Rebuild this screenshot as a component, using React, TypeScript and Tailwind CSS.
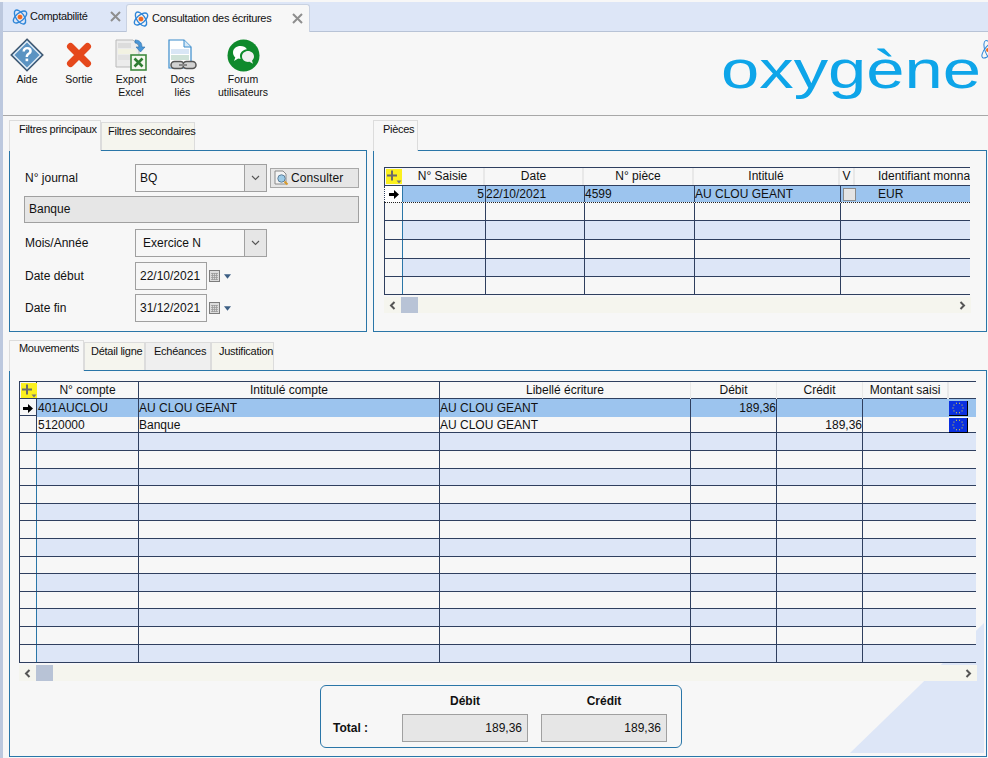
import type { ReactNode } from "react";

const LINE = "border-[#2f3f5f]";

function Atom() {
  return (
    <svg width="16" height="18" viewBox="0 0 16 18" className="shrink-0">
      <g fill="none" stroke="#2f86d8" strokeWidth="1.400">
        <ellipse cx="8" cy="9" rx="8" ry="4" transform="rotate(55 8 9)" />
        <ellipse cx="8" cy="9" rx="8" ry="4" transform="rotate(-40 8 9)" />
      </g>
      <circle cx="8" cy="9" r="2.800" fill="#ee6a22" stroke="#fff" strokeWidth=".6" />
    </svg>
  );
}

function CloseX() {
  return (
    <svg width="11" height="11" viewBox="0 0 11 11" className="shrink-0">
      <path d="M1 1l9 9M10 1l-9 9" stroke="#8e8e8e" strokeWidth="2" />
    </svg>
  );
}

function AideIcon() {
  return (
    <svg width="34" height="34" viewBox="0 0 34 34">
      <polygon points="17,1 33,17 17,33 1,17" fill="#3f78a8" stroke="#41566c" strokeWidth="1.200" />
      <polygon points="17,3.500 30.500,17 17,30.500 3.500,17" fill="#5b93c2" stroke="#e4edf5" strokeWidth="1.400" />
      <path d="M12.500 13.500c0-3 2-4.500 4.700-4.500 2.800 0 4.600 1.600 4.600 3.900 0 3.400-3.800 3.300-3.800 6.100h-2.400c0-4 3.600-4.100 3.600-6 0-1-.8-1.700-2-1.700-1.300 0-2.100.8-2.200 2.200z" fill="#fff" />
      <rect x="15.600" y="20.600" width="2.600" height="2.600" fill="#fff" />
    </svg>
  );
}

function SortieIcon() {
  return (
    <svg width="26" height="26" viewBox="0 0 26 26">
      <path d="M4.500 4.500l17 17M21.500 4.500l-17 17" stroke="#e5481c" strokeWidth="7" strokeLinecap="round" />
    </svg>
  );
}

function ExportIcon() {
  return (
    <svg width="32" height="32" viewBox="0 0 32 32">
      <path d="M1 1h17l6 6v21H1z" fill="#ececec" stroke="#b9b9b9" />
      <rect x="3" y="4" width="13" height="5" fill="#dcdcdc" />
      <rect x="3" y="10" width="18" height="5" fill="#f2f2e2" />
      <rect x="3" y="16" width="18" height="5" fill="#e2e2e2" />
      <path d="M20 1c5 0 7 3 7 7h3l-4.500 5L21 8h3c0-2-1-4-4-4z" fill="#4a97d8" stroke="#2f6fa8" strokeWidth=".6" />
      <rect x="16" y="16" width="15" height="15" fill="#f4f8ee" stroke="#3f8a3f" strokeWidth="1.600" />
      <path d="M19.500 19.500l8 8M27.500 19.500l-8 8" stroke="#2f7d32" strokeWidth="2.600" />
    </svg>
  );
}

function DocsIcon() {
  return (
    <svg width="30" height="32" viewBox="0 0 30 32">
      <path d="M1 1h15l7 7v21H1z" fill="#fff" stroke="#3a8ccc" strokeWidth="1.200" />
      <path d="M16 1v7h7" fill="#d6e8f6" stroke="#3a8ccc" />
      <rect x="3" y="10" width="18" height="5" fill="#d9e6f5" />
      <rect x="3" y="16" width="18" height="5" fill="#cfe2d8" />
      <g fill="#d2d2d2" stroke="#555" strokeWidth="1.500">
        <rect x="3" y="22.500" width="13" height="7" rx="3.500" />
        <rect x="15" y="22.500" width="13" height="7" rx="3.500" />
      </g>
      <rect x="11" y="25" width="8" height="2" fill="#888" />
    </svg>
  );
}

function ForumIcon() {
  return (
    <svg width="33" height="33" viewBox="0 0 33 33">
      <circle cx="16.500" cy="16.500" r="16" fill="#0f8a2c" />
      <path d="M6 13.500C6 9.500 9.500 7 13.500 7c2.800 0 5.200 1.200 6.400 3.200-4 .6-6.900 3.300-6.900 6.800 0 1 .2 1.900.7 2.800-.9.100-1.700 0-2.500-.2L7 22l1.300-3.500C6.900 17.200 6 15.500 6 13.500z" fill="#fff" />
      <path d="M15 17.500c0-3.200 2.900-5.500 6-5.500s6 2.300 6 5.500c0 1.700-.8 3.200-2 4.200l1 3-3.500-1.900c-3.800.8-7.500-1.700-7.500-5.300z" fill="#f0f0f0" />
    </svg>
  );
}

function ConsultIcon() {
  return (
    <svg width="15" height="16" viewBox="0 0 15 16" className="shrink-0">
      <path d="M1 1h8l3 3v10H1z" fill="#f4f4f4" stroke="#8a8a8a" />
      <circle cx="7.500" cy="8.500" r="3.700" fill="#9ccbe8" stroke="#5f7f9a" />
      <path d="M10.500 11.500l3 3" stroke="#d89a2a" strokeWidth="2" />
    </svg>
  );
}

function Calendar() {
  return (
    <div className="flex items-center gap-[3px]">
      <svg width="12" height="12" viewBox="0 0 12 12">
        <rect x=".5" y=".5" width="10" height="11" fill="#dcdcdc" stroke="#7c7c7c" />
        <path d="M2 3.500h7M2 5.500h7M2 7.500h7M2 9.500h7M3.500 3v7M5.500 3v7M7.500 3v7" stroke="#9a9a9a" strokeWidth=".8" />
      </svg>
      <svg width="7" height="5" viewBox="0 0 8 5">
        <path d="M0 0h8L4 5z" fill="#3d5f85" />
      </svg>
    </div>
  );
}

function ToolButton({ icon, label, className }: { icon: ReactNode; label: string[]; className: string }) {
  return (
    <div className={`flex shrink-0 flex-col items-center ${className}`}>
      <div className="flex h-[34px] items-center justify-center">{icon}</div>
      <div className="mt-[1px] text-center text-[10.5px] leading-[13px] text-[#111]">
        {label.map((line) => (
          <div key={line}>{line}</div>
        ))}
      </div>
    </div>
  );
}

function PanelTab({ label, active, className }: { label: string; active?: boolean; className: string }) {
  if (active) {
    return (
      <div className={`relative z-10 -mb-px h-[31px] shrink-0 border border-b-0 border-[#dcdcdc] bg-[#f7f7f7] text-[11px] leading-[15px] tracking-[-0.3px] text-[#111] ${className}`}>
        {label}
      </div>
    );
  }
  return (
    <div className={`mt-[2px] h-[28px] shrink-0 whitespace-nowrap border border-b-0 border-[#dcdcdc] pt-[1px] text-[11px] leading-[15px] tracking-[-0.25px] text-[#111] ${className}`}>
      {label}
    </div>
  );
}

function AddColumn() {
  return (
    <div className="relative ml-[1px] mt-[1px] h-[15px] w-[16px] bg-[#fbf01e]">
      <svg width="16" height="15" viewBox="0 0 16 15" className="absolute left-0 top-0">
        <path d="M1 6.500h10M6 1.500v10" stroke="#6b6b6b" strokeWidth="2" />
        <path d="M10.500 11.500h5l-2.500 3z" fill="#777" />
      </svg>
    </div>
  );
}

function RowArrow() {
  return (
    <svg width="10" height="9" viewBox="0 0 10 9">
      <path d="M0 3h5V0l5 4.500L5 9V6H0z" fill="#000" />
    </svg>
  );
}

function Flag() {
  return (
    <div className="mr-[8px] h-[15px] w-[19px] border-b border-r border-black bg-[#0a30e0]">
      <svg width="18" height="14" viewBox="0 0 18 14">
        {[0, 1, 2, 3, 4, 5, 6, 7, 8, 9].map((i) => (
          <rect
            key={i}
            x={8.500 + 5 * Math.cos((i * Math.PI) / 5)}
            y={6.500 + 5 * Math.sin((i * Math.PI) / 5)}
            width="1"
            height="1"
            fill="#f4e02a"
          />
        ))}
      </svg>
    </div>
  );
}

function ScrollBar({ className }: { className: string }) {
  return (
    <div className={`flex h-[16px] items-center bg-[#f5f5ee] ${className}`}>
      <div className="flex w-[17px] items-center justify-center">
        <svg width="7" height="9" viewBox="0 0 7 9">
          <path d="M5.500 1L2 4.500 5.500 8" fill="none" stroke="#555" strokeWidth="2" />
        </svg>
      </div>
      <div className="h-[16px] w-[17px] bg-[#b8c3d6]" />
      <svg width="7" height="9" viewBox="0 0 7 9" className="ml-auto mr-[5px]">
        <path d="M1.500 1L5 4.500 1.500 8" fill="none" stroke="#555" strokeWidth="2" />
      </svg>
    </div>
  );
}

const pieceHeights = [17, 18, 19, 19, 18, 18];

function PiecesGrid() {
  return (
    <div className={`w-[586px] border-t ${LINE} text-[12px] text-[#111]`}>
      <div className={`grid h-[18px] grid-cols-[18px_83px_99px_110px_146px_130px] border-b ${LINE} leading-[16px]`}>
        <div className={`border-l ${LINE}`}><AddColumn /></div>
        <div className="border-r-2 border-[#e8e8e8] text-center">N° Saisie</div>
        <div className="border-r-2 border-[#e8e8e8] text-center">Date</div>
        <div className="border-r-2 border-[#e8e8e8] text-center">N° pièce</div>
        <div className="border-r-2 border-[#e8e8e8] text-center">Intitulé</div>
        <div className="flex overflow-hidden">
          <div className="w-[15px] shrink-0 border-r-2 border-[#e8e8e8] text-center">V</div>
          <div className="ml-[23px] whitespace-nowrap">Identifiant monna</div>
        </div>
      </div>
      {pieceHeights.map((height, index) => {
        const selected = index === 0;
        const bg = selected ? "bg-[#9cc4ee]" : index % 2 === 0 ? "bg-[#dde6f7]" : "";
        return (
          <div
            key={index}
            style={{ height }}
            className={`grid grid-cols-[18px_83px_99px_110px_146px_130px] border-b ${selected ? "border-dotted border-[#222]" : LINE} leading-[16px]`}
          >
            <div className={`flex items-center justify-center border-l ${LINE} ${selected ? "border-dotted bg-white" : ""}`}>
              {selected && <RowArrow />}
            </div>
            <div className={`border-l border-[#2a76a8] ${bg} pr-px text-right`}>{selected ? "5" : ""}</div>
            <div className={`border-l ${LINE} ${bg}`}>{selected ? "22/10/2021" : ""}</div>
            <div className={`border-l ${LINE} ${bg}`}>{selected ? "4599" : ""}</div>
            <div className={`border-l ${LINE} ${bg}`}>{selected ? "AU CLOU GEANT" : ""}</div>
            <div className={`flex items-center border-l ${LINE} ${bg}`}>
              {selected && (
                <>
                  <div className="ml-[2px] h-[13px] w-[13px] border border-[#8a8a8a] bg-[#e4e4e4]" />
                  <div className="ml-[22px]">EUR</div>
                </>
              )}
            </div>
          </div>
        );
      })}
    </div>
  );
}

const moveHeights = [17, 17, 18, 18, 17, 18, 17, 18, 18, 17, 18, 17, 18, 18, 18];

const moves = [
  { compte: "401AUCLOU", intitule: "AU CLOU GEANT", libelle: "AU CLOU GEANT", debit: "189,36", credit: "" },
  { compte: "5120000", intitule: "Banque", libelle: "AU CLOU GEANT", debit: "", credit: "189,36" },
];

function MouvementsGrid() {
  const cols = "grid-cols-[17px_102px_301px_251px_86px_86px_114px]";
  return (
    <div className={`w-[957px] border-t ${LINE} bg-[#f7f7f7] text-[12px] text-[#111]`}>
      <div className={`grid h-[17px] ${cols} border-b ${LINE} leading-[17px]`}>
        <div className={`border-l ${LINE}`}><AddColumn /></div>
        <div className={`border-l ${LINE} text-center`}>N° compte</div>
        <div className={`border-l ${LINE} text-center`}>Intitulé compte</div>
        <div className={`border-l ${LINE} text-center`}>Libellé écriture</div>
        <div className="border-l border-[#e8e8e8] text-center">Débit</div>
        <div className="border-l border-[#e8e8e8] text-center">Crédit</div>
        <div className="flex border-l border-[#e8e8e8]">
          <div className="w-[86px] border-r-2 border-[#e8e8e8] text-center">Montant saisi</div>
        </div>
      </div>
      {moveHeights.map((height, index) => {
        const move = moves[index];
        const bg = index === 0 ? "bg-[#9cc4ee]" : index % 2 === 0 ? "bg-[#dde6f7]" : "";
        return (
          <div key={index} style={{ height }} className={`grid ${cols} border-b ${LINE} leading-[18px]`}>
            <div className={`flex items-center justify-center border-l ${LINE}`}>
              {index === 0 && <RowArrow />}
            </div>
            <div className={`border-l ${index < 2 ? LINE : "border-[#2a76a8]"} ${bg} pl-px`}>{move?.compte}</div>
            <div className={`border-l ${LINE} ${bg}`}>{move?.intitule}</div>
            <div className={`border-l ${LINE} ${bg}`}>{move?.libelle}</div>
            <div className={`border-l ${LINE} ${bg} text-right`}>{move?.debit}</div>
            <div className={`border-l ${LINE} ${bg} text-right`}>{move?.credit}</div>
            <div className={`flex items-center justify-end border-l ${LINE} ${bg}`}>{move && <Flag />}</div>
          </div>
        );
      })}
    </div>
  );
}

function Combo({ value, indent }: { value: string; indent: string }) {
  return (
    <div className="flex h-[28px] w-[132px] shrink-0 border border-[#a0a0a0] bg-[#f7f7f7]">
      <div className={`flex-1 leading-[26px] ${indent}`}>{value}</div>
      <div className="flex w-[22px] items-center justify-center border-l border-[#a0a0a0] bg-[#e6e6e6]">
        <svg width="9" height="6" viewBox="0 0 9 6">
          <path d="M1 1l3.500 3.500L8 1" fill="none" stroke="#555" strokeWidth="1.100" />
        </svg>
      </div>
    </div>
  );
}

function DateField({ label, value, className }: { label: string; value: string; className: string }) {
  return (
    <div className={`flex items-center ${className}`}>
      <div className="w-[110px]">{label}</div>
      <div className="h-[28px] w-[72px] border border-[#a0a0a0] pl-[4px] leading-[26px]">{value}</div>
      <div className="ml-[2px]"><Calendar /></div>
    </div>
  );
}

export default function App() {
  return (
    <div className="flex h-[758px] w-[988px] overflow-hidden bg-[#f7f7f7] [font-family:'Liberation_Sans',Arial,sans-serif]">
      <div className="mt-[2px] w-[3px] shrink-0 bg-[#bcc8de]" />
      <div className="flex min-w-0 flex-1 flex-col">
        {/* onglets du haut */}
        <div className="mt-[2px] flex h-[30px] shrink-0 border-b border-[#b8c3d6] bg-[#dde6f7]">
          <div className="flex h-[29px] w-[123px] items-center pl-[9px] pr-[5px] text-[11px] tracking-[-0.3px] text-[#111]">
            <Atom />
            <span className="ml-[2px]">Comptabilité</span>
            <span className="ml-auto"><CloseX /></span>
          </div>
          <div className="relative z-10 mt-[2px] flex h-[28px] w-[184px] items-center rounded-t-[3px] border border-b-0 border-[#c9d2e2] bg-[#f7f7f7] pl-[6px] pr-[6px] text-[11px] tracking-[-0.3px] text-[#111]">
            <Atom />
            <span className="ml-[3px]">Consultation des écritures</span>
            <span className="ml-auto"><CloseX /></span>
          </div>
        </div>

        {/* barre d'outils */}
        <div className="flex h-[84px] shrink-0 border-b border-[#a8a8a8] pt-[6px]">
          <ToolButton className="w-[48px]" icon={<AideIcon />} label={["Aide"]} />
          <ToolButton className="ml-[2px] w-[52px]" icon={<SortieIcon />} label={["Sortie"]} />
          <ToolButton className="w-[52px]" icon={<ExportIcon />} label={["Export", "Excel"]} />
          <ToolButton className="w-[51px]" icon={<DocsIcon />} label={["Docs", "liés"]} />
          <ToolButton className="w-[70px]" icon={<ForumIcon />} label={["Forum", "utilisateurs"]} />
          <svg width="270" height="64" viewBox="0 0 270 64" className="-mt-[2px] ml-auto shrink-0">
            <text x="3" y="52" fontSize="54" fill="#0ea5e9" textLength="260" lengthAdjust="spacingAndGlyphs" fontFamily="'Liberation Sans', Arial, sans-serif">
              oxygène
            </text>
            <g fill="none" stroke="#2f86d8" strokeWidth="1">
              <ellipse cx="271" cy="14" rx="10" ry="4" transform="rotate(70 271 14)" />
              <ellipse cx="271" cy="14" rx="10" ry="4" transform="rotate(-50 271 14)" />
            </g>
            <circle cx="270" cy="14" r="2" fill="#ee6a22" />
          </svg>
        </div>

        {/* filtres + pièces */}
        <div className="ml-[6px] mt-[4px] flex shrink-0 gap-[6px]">
          <div className="w-[358px] shrink-0">
            <div className="flex h-[30px]">
              <PanelTab active label="Filtres principaux" className="w-[92px] pl-[9px] pt-[1px]" />
              <PanelTab label="Filtres secondaires" className="w-[94px] bg-[#f5f5ee] pl-[6px]" />
            </div>
            <div className="h-[182px] border border-[#2a76a8] px-[15px] pt-[13px] text-[12px] text-[#111]">
              <div className="flex items-center">
                <div className="w-[110px] shrink-0">N° journal</div>
                <Combo value="BQ" indent="pl-[4px]" />
                <div className="ml-[3px] flex h-[20px] w-[89px] shrink-0 items-center border border-[#a8a8a8] bg-[#e6e6e6] pl-[3px]">
                  <ConsultIcon />
                  <span className="ml-[2px] tracking-[0.1px]">Consulter</span>
                </div>
              </div>
              <div className="-ml-px mt-[4px] h-[27px] w-[335px] border border-[#a0a0a0] bg-[#e6e6e6] pl-[4px] leading-[25px]">
                Banque
              </div>
              <div className="mt-[6px] flex items-center">
                <div className="w-[110px] shrink-0">Mois/Année</div>
                <Combo value="Exercice N" indent="pl-[7px]" />
              </div>
              <DateField label="Date début" value="22/10/2021" className="mt-[5px]" />
              <DateField label="Date fin" value="31/12/2021" className="mt-[4px]" />
            </div>
          </div>
          <div className="w-[614px] shrink-0">
            <div className="flex h-[30px]">
              <PanelTab active label="Pièces" className="w-[45px] pl-[9px] pt-[1px]" />
            </div>
            <div className="h-[182px] border border-[#2a76a8] pl-[10px] pt-[16px]">
              <PiecesGrid />
              <ScrollBar className="mt-[2px] w-[587px]" />
            </div>
          </div>
        </div>

        {/* mouvements */}
        <div className="ml-[6px] mt-[8px] flex h-[30px] shrink-0">
          <PanelTab active label="Mouvements" className="w-[75px] pl-[9px]" />
          <PanelTab label="Détail ligne" className="w-[61px] bg-[#f5f5ee] pl-[6px]" />
          <PanelTab label="Echéances" className="w-[66px] bg-[#efefef] pl-[8px]" />
          <PanelTab label="Justification" className="w-[63px] bg-[#f5f5ee] pl-[7px]" />
        </div>
        <div className="relative ml-[6px] h-[387px] w-[978px] shrink-0 overflow-hidden border border-[#2a76a8] pl-[9px] pt-[10px]">
          <div className="absolute bottom-[3px] right-[2px] h-[130px] w-[134px] bg-[#dde6f7] [clip-path:polygon(100%_0,100%_100%,0_100%)]" />
          <div className="relative">
            <MouvementsGrid />
            <ScrollBar className="mt-[2px] w-[958px]" />
          </div>
          <div className="relative ml-[301px] mt-[4px] h-[63px] w-[362px] rounded-[6px] border border-[#2a76a8] bg-[#f7f7f7] pl-[12px] text-[12px] font-bold text-[#111]">
            <div className="mt-[6px] grid grid-cols-[56px_126px_126px] gap-x-[13px] gap-y-[6px]">
              <div />
              <div className="h-[16px] text-center">Débit</div>
              <div className="h-[16px] text-center">Crédit</div>
              <div className="leading-[28px]">Total :</div>
              <div className="h-[28px] border border-[#a0a0a0] bg-[#e6e6e6] pr-[5px] text-right font-normal leading-[26px]">189,36</div>
              <div className="h-[28px] border border-[#a0a0a0] bg-[#e6e6e6] pr-[5px] text-right font-normal leading-[26px]">189,36</div>
            </div>
          </div>
        </div>
      </div>
    </div>
  );
}
